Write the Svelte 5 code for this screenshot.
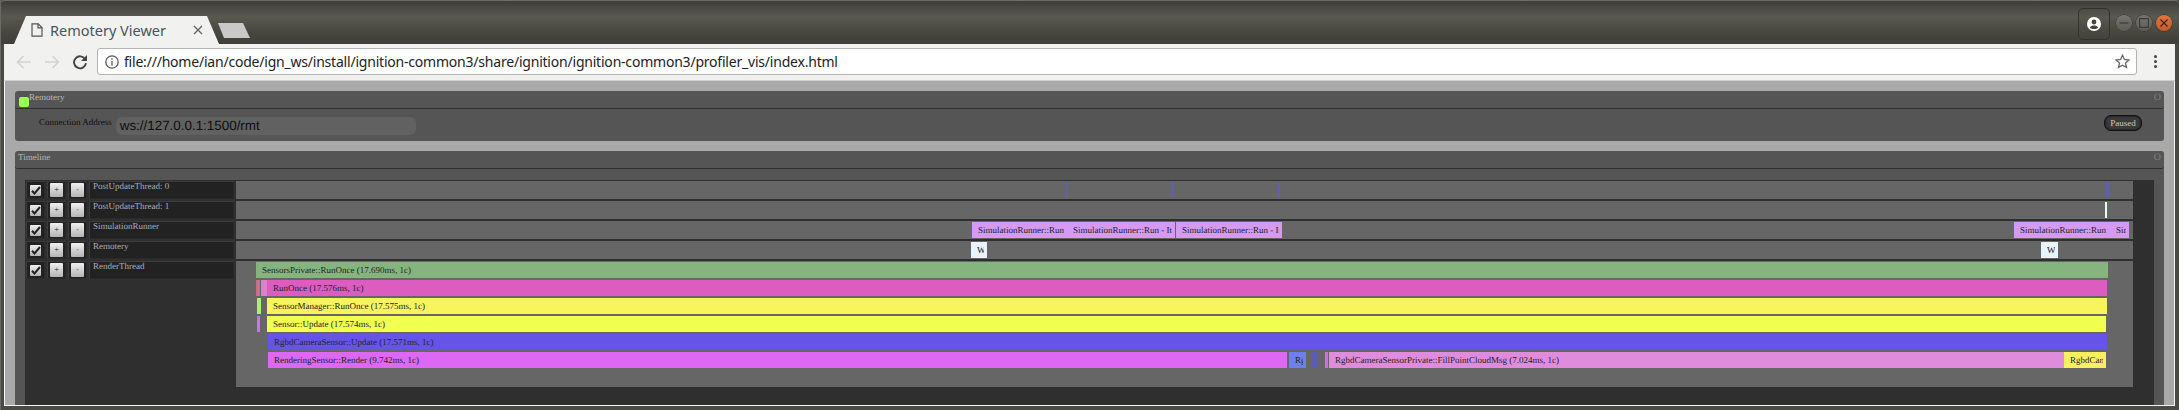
<script lang="ts">
    const TRACK_X = 236;

    const threads = [
        {
            name: "PostUpdateThread: 0",
            samples: [
                { x: 1065, w: 3, c: "#6060a8", l: 0 },
                { x: 1171, w: 3, c: "#6060a8", l: 0 },
                { x: 1278, w: 2, c: "#6060a8", l: 0 },
                { x: 2105, w: 5, c: "#6060a8", l: 0 },
            ],
        },
        {
            name: "PostUpdateThread: 1",
            samples: [{ x: 2105, w: 2, c: "#e2fff0", l: 0 }],
        },
        {
            name: "SimulationRunner",
            samples: [
                { x: 972, w: 95, c: "#d49af4", l: 0, t: "SimulationRunner::Run - Iteration" },
                { x: 1067, w: 108, c: "#d49af4", l: 0, t: "SimulationRunner::Run - Iteration" },
                { x: 1176, w: 106, c: "#d49af4", l: 0, t: "SimulationRunner::Run - Iteration" },
                { x: 2014, w: 96, c: "#d49af4", l: 0, t: "SimulationRunner::Run - Iteration" },
                { x: 2110, w: 19, c: "#d49af4", l: 0, t: "SimulationRunner::Run - Iteration" },
            ],
        },
        {
            name: "Remotery",
            samples: [
                { x: 971, w: 16, c: "#e8f4ff", l: 0, t: "Write" },
                { x: 2041, w: 17, c: "#e8f4ff", l: 0, t: "Write" },
            ],
        },
        {
            name: "RenderThread",
            tall: true,
            samples: [
                { x: 256, w: 1852, c: "#86b47e", l: 0, t: "SensorsPrivate::RunOnce (17.690ms, 1c)" },
                { x: 256, w: 4, c: "#c8708c", l: 1 },
                { x: 261, w: 6, c: "#e080c8", l: 1 },
                { x: 267, w: 1840, c: "#dc5cc0", l: 1, t: "RunOnce (17.576ms, 1c)" },
                { x: 257, w: 4, c: "#a8f070", l: 2 },
                { x: 267, w: 1840, c: "#f8f45c", l: 2, t: "SensorManager::RunOnce (17.575ms, 1c)" },
                { x: 257, w: 3, c: "#d070f0", l: 3 },
                { x: 267, w: 1839, c: "#f0ff50", l: 3, t: "Sensor::Update (17.574ms, 1c)" },
                { x: 268, w: 1839, c: "#6654e8", l: 4, t: "RgbdCameraSensor::Update (17.571ms, 1c)" },
                { x: 268, w: 1019, c: "#dc68f4", l: 5, t: "RenderingSensor::Render (9.742ms, 1c)" },
                { x: 1289, w: 17, c: "#6c80f0", l: 5, t: "RgbdCamera" },
                { x: 1312, w: 5, c: "#5c5cb0", l: 5 },
                { x: 1325, w: 3, c: "#d868f0", l: 5 },
                { x: 1329, w: 735, c: "#e08cdc", l: 5, t: "RgbdCameraSensorPrivate::FillPointCloudMsg (7.024ms, 1c)" },
                { x: 2064, w: 42, c: "#f8f060", l: 5, t: "RgbdCameraSensor" },
            ],
        },
    ];
</script>

<div class="window">
    <header class="titlebar">
        <div class="tab">
            <svg class="doc" width="12" height="14" viewBox="0 0 12 14" fill="none" stroke="#555" stroke-width="1.2">
                <path d="M1 .8h6.2L11 4.6v8.6H1z" />
                <path d="M7 .8v4h4" />
            </svg>
            <span class="tab-title">Remotery Viewer</span>
            <svg class="tab-close" width="10" height="10" viewBox="0 0 10 10" stroke="#666" stroke-width="1.4">
                <path d="M1 1l8 8M9 1l-8 8" />
            </svg>
        </div>
        <div class="new-tab"></div>
        <div class="spacer"></div>
        <div class="profile">
            <svg width="16" height="16" viewBox="0 0 16 16">
                <circle cx="8" cy="8" r="7" fill="#fff" />
                <circle cx="8" cy="6" r="2.4" fill="#45443e" />
                <path d="M3.8 11.4c1-1.6 2.6-2 4.2-2s3.2.4 4.2 2c-1 1-2.5 1.6-4.2 1.6s-3.2-.6-4.2-1.6z" fill="#45443e" />
            </svg>
        </div>
        <div class="win-buttons">
            <div class="win-btn">
                <svg width="16" height="16" viewBox="0 0 16 16" stroke="#3c3b37" stroke-width="1.2"><path d="M3.5 8h9" /></svg>
            </div>
            <div class="win-btn">
                <svg width="16" height="16" viewBox="0 0 16 16" fill="none" stroke="#3c3b37" stroke-width="1.2"><rect x="3.6" y="3.6" width="8.8" height="8.8" /></svg>
            </div>
            <div class="win-btn close">
                <svg width="16" height="16" viewBox="0 0 16 16" stroke="#40230f" stroke-width="1.2"><path d="M4.5 4.5l7 7M11.5 4.5l-7 7" /></svg>
            </div>
        </div>
    </header>

    <nav class="toolbar">
        <svg class="nav" width="16" height="14" viewBox="0 0 16 14" fill="none" stroke="#d4d4d2" stroke-width="1.7">
            <path d="M15 7H2M7.5 1L1.6 7l5.9 6" />
        </svg>
        <svg class="nav fwd" width="16" height="14" viewBox="0 0 16 14" fill="none" stroke="#d4d4d2" stroke-width="1.7">
            <path d="M1 7h13M8.5 1l5.9 6-5.9 6" />
        </svg>
        <svg class="nav reload" width="16" height="16" viewBox="0 0 16 16" fill="none">
            <path d="M13.2 5.2A6 6 0 1 0 14 9.2" stroke="#444" stroke-width="1.9" />
            <path d="M15 1v6H9z" fill="#444" />
        </svg>
        <div class="omnibox">
            <svg width="14" height="14" viewBox="0 0 14 14" fill="none" stroke="#5a5a5a" stroke-width="1.3">
                <circle cx="7" cy="7" r="6.2" />
                <path d="M7 6v4.6M7 3.2v1.5" />
            </svg>
            <span class="url">file:///home/ian/code/ign_ws/install/ignition-common3/share/ignition/ignition-common3/profiler_vis/index.html</span>
            <svg class="star" width="15" height="15" viewBox="0 0 15 15" fill="none" stroke="#666" stroke-width="1.3">
                <path d="M7.5 1.3l1.9 4.2 4.5.5-3.4 3 1 4.500-4-2.300-4 2.300 1-4.500-3.400-3 4.500-.5z" />
            </svg>
        </div>
        <div class="menu"><i></i><i></i><i></i></div>
    </nav>

    <main class="page">
        <section class="panel">
            <div class="panel-title">
                <span class="status"></span>
                <span class="title-text offset">Remotery</span>
                <span class="grip">O</span>
            </div>
            <div class="connection">
                <span class="label">Connection Address</span>
                <div class="address">ws://127.0.0.1:1500/rmt</div>
                <div class="spacer"></div>
                <button class="paused">Paused</button>
            </div>
        </section>

        <section class="panel timeline">
            <div class="panel-title">
                <span class="title-text">Timeline</span>
                <span class="grip">O</span>
            </div>
            <div class="timeline-body">
                <div class="threads">
                    {#each threads as thread}
                        <div class="thread">
                            <div class="cell check-cell">
                                <span class="check">
                                    <svg width="10" height="9" viewBox="0 0 10 9" fill="none" stroke="#222" stroke-width="2"><path d="M1 4.800l2.500 2.700L9 1" /></svg>
                                </span>
                            </div>
                            <div class="cell"><span class="btn">+</span></div>
                            <div class="cell"><span class="btn">-</span></div>
                            <div class="name">{thread.name}</div>
                            <div class="track" class:tall={thread.tall}>
                                {#each thread.samples as s}
                                    <div
                                        class="sample"
                                        style="left:{s.x - TRACK_X}px;width:{s.w}px;top:{s.l * 18 + 1}px;background:{s.c}"
                                    >
                                        {#if s.t}<span>{s.t}</span>{/if}
                                    </div>
                                {/each}
                            </div>
                        </div>
                    {/each}
                </div>
            </div>
        </section>
    </main>
</div>

<style>
    :global(body) {
        background: #4a4a44;
    }

    .window {
        width: 2179px;
        height: 410px;
        overflow: hidden;
        display: flex;
        flex-direction: column;
        background: #4a4a44;
        box-shadow: inset 1px 0 #6a6a66;
        font-family: "Liberation Serif", serif;
    }

    .spacer {
        flex: 1;
    }

    .titlebar {
        flex: none;
        height: 44px;
        box-sizing: border-box;
        display: flex;
        align-items: flex-end;
        padding: 0 14px 0 14px;
        border-top: 1px solid #6a6a66;
        border-radius: 4px 4px 0 0;
        box-shadow: inset 1px 0 #6a6a66;
        background: linear-gradient(#3f3e3a 0, #5a5950 16px, #494841 30px, #3e3d38 44px);
    }

    .tab {
        width: 205px;
        height: 28px;
        box-sizing: border-box;
        padding: 0 17px;
        display: flex;
        align-items: center;
        background: #f1f1ef;
        clip-path: polygon(0 100%, 12px 0, 193px 0, 205px 100%);
        font-family: "Noto Sans", sans-serif;
    }

    .doc {
        margin-right: 7px;
    }

    .tab-title {
        font-size: 14.500px;
        color: #4b5360;
        flex: 1;
        white-space: nowrap;
    }

    .tab-close {
        margin-right: -1px;
    }

    .new-tab {
        width: 32px;
        height: 15px;
        margin: 0 0 6px -1px;
        background: #c9c9c7;
        clip-path: polygon(0 0, 25px 0, 32px 100%, 6px 100%);
    }

    .profile {
        width: 32px;
        height: 32px;
        box-sizing: border-box;
        margin: 0 6px 4px 0;
        border: 1px solid #33322e;
        border-radius: 5px;
        display: flex;
        align-items: center;
        justify-content: center;
    }

    .win-buttons {
        display: flex;
        gap: 4px;
        margin: 0 -7px 13px 0;
    }

    .win-btn {
        width: 16px;
        height: 16px;
        border-radius: 50%;
        background: linear-gradient(#767670, #5c5b55);
        box-shadow: 0 0 0 .5px #33322e;
        display: flex;
    }

    .win-btn.close {
        background: linear-gradient(#e0743a, #c45c28);
    }

    .toolbar {
        flex: none;
        height: 37px;
        margin: 0 4px;
        box-sizing: border-box;
        padding: 5px 0 6px 12px;
        display: flex;
        align-items: center;
        background: #f1f1ef;
        border-bottom: 1px solid #d0d0ce;
    }

    .nav {
        flex: none;
    }

    .fwd {
        margin-left: 12px;
    }

    .reload {
        margin-left: 12px;
        margin-right: 9px;
    }

    .omnibox {
        flex: none;
        width: 2040px;
        height: 27px;
        box-sizing: border-box;
        padding: 0 5px 0 7px;
        display: flex;
        align-items: center;
        background: #fff;
        border: 1px solid #b4b4b4;
        border-radius: 3px;
    }

    .url {
        margin-left: 5px;
        flex: 1;
        font-family: "Noto Sans", sans-serif;
        font-size: 14px;
        letter-spacing: -0.21px;
        color: #222;
        white-space: nowrap;
    }

    .star {
        margin-right: 1px;
    }

    .menu {
        margin-left: 17px;
        display: flex;
        flex-direction: column;
        gap: 2px;
    }

    .menu i {
        width: 3px;
        height: 3px;
        border-radius: 50%;
        background: #444;
    }

    .page {
        flex: 1;
        min-height: 0;
        margin: 0 4px 4px;
        padding: 10px 10px 0;
        display: flex;
        flex-direction: column;
        gap: 10px;
        overflow: hidden;
        background: #a9a9a9;
        border: solid #f4f4f4;
        border-width: 0 1px 1px;
        text-rendering: geometricPrecision;
    }

    .panel {
        flex: none;
        background: #555;
        border-radius: 3px;
        overflow: hidden;
    }

    .panel.timeline {
        flex: 1;
        display: flex;
        flex-direction: column;
        min-height: 0;
        border-radius: 3px 3px 0 0;
    }

    .panel-title {
        flex: none;
        position: relative;
        height: 18px;
        box-sizing: border-box;
        padding: 1px 3px 0 3px;
        display: flex;
        font-size: 9px;
        color: #b8b8b8;
        border-bottom: 1px solid #2e2e2e;
        border-radius: 0 0 3px 3px;
    }

    .title-text {
        flex: 1;
        line-height: 11px;
    }

    .title-text.offset {
        margin-left: 11px;
    }

    .status {
        position: absolute;
        left: 4px;
        top: 6px;
        width: 10px;
        height: 10px;
        border-radius: 2px;
        background: #99ff55;
    }

    .grip {
        color: #808080;
        font-size: 10px;
        line-height: 11px;
    }

    .connection {
        height: 32px;
        box-sizing: border-box;
        padding: 8px 22px 0 24px;
        display: flex;
        align-items: flex-start;
    }

    .label {
        font-size: 9px;
        color: #101010;
        line-height: 11px;
        margin-right: 4px;
        white-space: nowrap;
    }

    .address {
        width: 300px;
        height: 18px;
        box-sizing: border-box;
        padding-left: 4px;
        background: #616161;
        border-radius: 6px;
        font-family: "Liberation Sans", sans-serif;
        font-size: 13.400px;
        line-height: 18px;
        color: #0e0e0e;
    }

    .paused {
        width: 38px;
        height: 16px;
        margin-top: -2px;
        padding: 0;
        background: #3a3a3a;
        border: 1px solid #111;
        border-radius: 7px;
        box-shadow: inset 0 0 2px #000;
        font: 9px "Liberation Serif", serif;
        color: #c8c8c8;
    }

    .timeline-body {
        flex: 1;
        min-height: 0;
        margin: 11px 10px 0;
        padding: 1px 21px 0 1px;
        background: #2f2f2f;
        overflow: hidden;
    }

    .threads {
        display: flex;
        flex-direction: column;
        gap: 2px;
    }

    .thread {
        display: flex;
        align-items: flex-start;
        gap: 2px;
    }

    .cell {
        flex: none;
        width: 19px;
        height: 18px;
        box-sizing: border-box;
        display: flex;
        align-items: center;
        justify-content: center;
        background: #222;
        border: 1px solid #3c3c3c;
        border-color: #3c3c3c #2a2a2a #2a2a2a #3c3c3c;
    }

    .check,
    .btn {
        box-sizing: border-box;
        display: flex;
        align-items: center;
        justify-content: center;
        background: linear-gradient(#f0f0f0, #b4b4b4);
        border-radius: 1px;
    }

    .check {
        width: 11px;
        height: 11px;
    }

    .btn {
        width: 13px;
        height: 14px;
        font: 8px/1 "Liberation Sans", sans-serif;
        color: #555;
    }

    .name {
        flex: none;
        width: 145px;
        height: 18px;
        box-sizing: border-box;
        padding: 0 3px;
        background: #222;
        border: 1px solid #3c3c3c;
        border-color: #3c3c3c #2a2a2a #2a2a2a #3c3c3c;
        font-size: 9px;
        line-height: 9px;
        color: #a8acb8;
    }

    .track {
        flex: none;
        position: relative;
        width: 1897px;
        height: 18px;
        background: #666;
        overflow: hidden;
    }

    .track.tall {
        height: 126px;
    }

    .sample {
        position: absolute;
        height: 16px;
        font-size: 9px;
        line-height: 16px;
        color: #252525;
        white-space: nowrap;
    }

    .sample span {
        display: block;
        margin: 0 3px 0 6px;
        overflow: hidden;
    }
</style>
